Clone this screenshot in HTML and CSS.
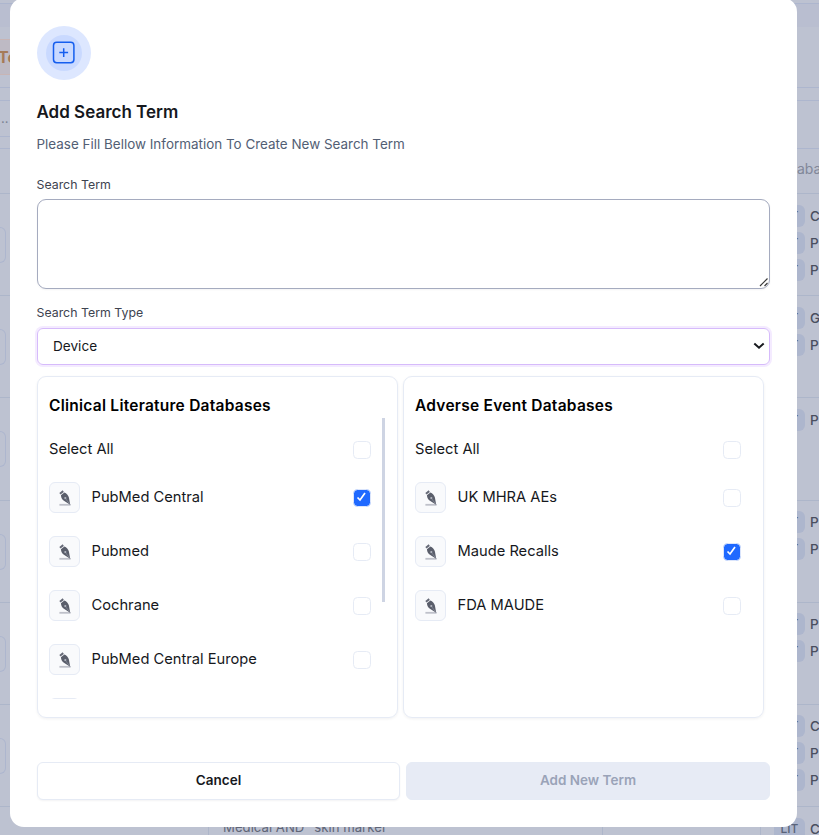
FILE: index.html
```html
<!DOCTYPE html>
<html lang="en">
<head>
<meta charset="utf-8">
<title>Add Search Term</title>
<link rel="stylesheet" href="styles.css">
</head>
<body>
<svg class="defs" aria-hidden="true">
  <symbol id="pen" viewBox="0 0 14 18">
    <path d="M1.4 15.8h11.2" stroke="#bfc1ca" stroke-width="1.8"/>
    <path d="M1.3 4.1 4.7 1.3 5.9 2.9 2.5 5.6Z" fill="#666a77"/>
    <path d="M2.9 6.2 6.4 3.4C8.5 4.4 10.4 6 10.9 8.6L12.2 15.8 6.3 12C4.2 10.800 3.200 9 2.900 6.200Z" fill="#5a5e6b"/>
    <path d="M7.7 9.800 11.900 15.300" stroke="#8d919d" stroke-width=".7"/>
    <circle cx="7.300" cy="9" r="1.100" fill="#b4b7c1"/>
  </symbol>
</svg>
<div class="page">
  <div class="strip top"></div>
  <div class="strip tabs"><span class="tab">Te</span></div>
  <div class="strip gap"></div>
  <div class="strip filter">..</div>
  <div class="strip gap2"></div>
  <div class="row head"><span>aba</span></div>
  <div class="row"><i class="pill"></i><div class="tags"><p><b>LIT</b>C</p><p><b>LIT</b>P</p><p><b>LIT</b>P</p></div></div>
  <div class="row"><i class="pill"></i><div class="tags"><p><b>LIT</b>G</p><p><b>LIT</b>P</p></div></div>
  <div class="row"><i class="pill"></i><div class="tags"><p><b>LIT</b>P</p></div></div>
  <div class="row"><i class="pill"></i><div class="tags"><p><b>LIT</b>P</p><p><b>LIT</b>P</p></div></div>
  <div class="row"><i class="pill"></i><div class="tags"><p><b>LIT</b>P</p><p><b>LIT</b>P</p></div></div>
  <div class="row"><i class="pill"></i><div class="tags"><p><b>LIT</b>C</p><p><b>LIT</b>P</p><p><b>LIT</b>P</p></div></div>
  <div class="row last"><div class="term">Medical AND "skin marker</div><div class="cell"></div><div class="tags"><p><b>LIT</b>C</p></div></div>
</div>

<main class="modal">
  <div class="badge"><div class="badge-in">
    <svg width="24" height="24" viewBox="0 0 24 24" fill="none" stroke="#155eef" stroke-width="1.5"><rect x="1.500" y="1.300" width="20.400" height="20.400" rx="3.200"/><path d="M11.700 7.200v8.800M7.300 11.600h8.800"/></svg>
  </div></div>
  <h1>Add Search Term</h1>
  <p class="sub">Please Fill Bellow Information To Create New Search Term</p>
  <label for="term">Search Term</label>
  <div class="field"><textarea id="term"></textarea><svg class="grip" width="10" height="10" viewBox="0 0 10 10" stroke="#3a3a3a" stroke-width="1.200"><path d="M1 9 8.500 1.500M5.500 9 8.500 6"/></svg></div>
  <label>Search Term Type</label>
  <div class="select"><span>Device</span><svg width="12" height="8" viewBox="0 0 12 8" fill="none" stroke="#16181d" stroke-width="2"><path d="M1.300 1.500 6 5.700l4.700-4.200"/></svg></div>
  <div class="panels">
    <section class="panel">
      <h2>Clinical Literature Databases</h2>
      <div class="list scroll">
        <div class="all"><span>Select All</span><i class="box"></i></div>
        <div class="item"><span class="ico"><svg><use href="#pen"/></svg></span><span class="name">PubMed Central</span><i class="box on"><svg viewBox="0 0 16 16"><path d="M3.500 7.500 6 10 11 3"/></svg></i></div>
        <div class="item"><span class="ico"><svg><use href="#pen"/></svg></span><span class="name">Pubmed</span><i class="box"></i></div>
        <div class="item"><span class="ico"><svg><use href="#pen"/></svg></span><span class="name">Cochrane</span><i class="box"></i></div>
        <div class="item"><span class="ico"><svg><use href="#pen"/></svg></span><span class="name">PubMed Central Europe</span><i class="box"></i></div>
        <div class="item"><span class="ico"></span></div>
      </div>
      <i class="thumb"></i>
    </section>
    <section class="panel">
      <h2>Adverse Event Databases</h2>
      <div class="list">
        <div class="all"><span>Select All</span><i class="box"></i></div>
        <div class="item"><span class="ico"><svg><use href="#pen"/></svg></span><span class="name">UK MHRA AEs</span><i class="box"></i></div>
        <div class="item"><span class="ico"><svg><use href="#pen"/></svg></span><span class="name">Maude Recalls</span><i class="box on"><svg viewBox="0 0 16 16"><path d="M3.500 7.500 6 10 11 3"/></svg></i></div>
        <div class="item"><span class="ico"><svg><use href="#pen"/></svg></span><span class="name">FDA MAUDE</span><i class="box"></i></div>
      </div>
    </section>
  </div>
  <div class="actions">
    <button class="cancel">Cancel</button>
    <button class="add">Add New Term</button>
  </div>
</main>
</body>
</html>
```
FILE: styles.css
```css
* { box-sizing: border-box; }
body { margin: 0; height: 835px; overflow: hidden; position: relative; background: #bdc2d1; font-family: Inter, sans-serif; color: #16181d; }
p, h1, h2 { margin: 0; }
.defs { position: absolute; width: 0; height: 0; }

.page { height: 835px; overflow: hidden; color: #4a4f5f; }
.strip { border-bottom: 1px solid #adb6ce; overflow: hidden; }
.top { height: 4px; }
.tabs { height: 84px; padding-top: 35px; background: linear-gradient(#b9bed0 0 23px, transparent 23px); }
.tab { display: block; width: 30px; height: 36px; border: 1px solid #c8b5b5; border-width: 1px 0; background: #bebac4; color: #a57a58; font-size: 16px; font-weight: 700; line-height: 34px; text-indent: -2px; }
.gap { height: 13px; }
.filter { height: 36px; width: 10px; padding-left: 1px; font-size: 13px; line-height: 35px; color: #7c8294; }
.gap2 { height: 12px; }
.row { display: flex; justify-content: space-between; height: 102.2px; border-bottom: 1px solid #adb6ca; }
.head { height: 45px; align-items: center; justify-content: flex-end; font-size: 14px; color: #818799; }
.head span { width: 22px; overflow: hidden; white-space: nowrap; line-height: 20px; margin-top: -4px; }
.pill { width: 6px; height: 36px; margin-top: 33px; border: 1px solid #adb6ce; border-left: 0; border-radius: 0 8px 8px 0; }
.tags { width: 45px; padding-top: 10.500px; display: flex; flex-direction: column; gap: 5px; }
.tags p { display: flex; align-items: center; gap: 5px; height: 22px; font-size: 13.500px; font-weight: 500; line-height: 20px; white-space: nowrap; }
.tags b { flex: none; width: 31px; height: 22px; border-radius: 6px; background: #adb6cd; font-size: 12px; line-height: 22px; text-align: center; font-weight: 500; color: #5a6379; }
.last { border: 0; }
.last .term { width: 395px; margin-left: 208px; padding: 12px 0 0 14px; border: 1px solid #adb6ca; border-width: 0 1px; font-size: 13.200px; line-height: 17px; color: #606577; }
.last .cell { flex: 1; margin-right: 13px; border-right: 1px solid #adb6ca; }

.modal { position: absolute; left: 10px; top: -2px; width: 787px; height: 829px; padding: 28px 27px 0; background: #fff; border-radius: 14px; }
.badge { display: grid; place-items: center; width: 54px; height: 54px; border-radius: 50%; background: #dde7ff; }
.badge-in { display: grid; place-items: center; width: 36px; height: 36px; border-radius: 50%; background: #c9d9ff; }
h1 { margin: 20px 0 0 -.5px; font-size: 17px; line-height: 24px; font-weight: 600; }
.sub { margin: 10px 0 21px -.5px; font-size: 13.450px; line-height: 20px; color: #525e74; }
label { display: block; margin-left: -.5px; font-size: 12.350px; line-height: 20px; color: #3e4350; }
.field { position: relative; width: 733px; margin: 4px 0 14px; }
textarea { display: block; width: 733px; height: 90px; border: 1px solid #a5abbf; border-radius: 9px; background: #fff; box-shadow: 0 1px 2px #1018280d; resize: none; }
.grip { position: absolute; right: 1px; bottom: 2px; }
.select { display: flex; justify-content: space-between; align-items: center; width: 733px; height: 37px; margin-top: 5px; padding: 0 4px 1px 15px; border: 1px solid #d6bbfb; border-radius: 6px; box-shadow: 0 0 0 2px #f4ebff; font-size: 13.600px; }
.panels { display: grid; grid-template-columns: 361px 361px; gap: 5px; margin-top: 11px; }
.panel { position: relative; height: 342px; padding: 18px 11px 0; border: 1px solid #e6ebf5; border-radius: 9px; box-shadow: 0 1px 3px #1018280f; }
h2 { font-size: 15.500px; letter-spacing: .25px; line-height: 22px; font-weight: 600; color: #000; white-space: nowrap; }
.list { height: 282px; overflow: hidden; padding-right: 11px; font-size: 14.700px; }
.scroll { padding-right: 15px; }
.all { display: flex; justify-content: space-between; align-items: center; height: 65px; padding-bottom: 2px; }
.all .box { position: relative; top: 1px; }
.item { display: flex; align-items: center; gap: 11px; height: 31px; margin-bottom: 23px; }
.name { padding: 0 0 1px .5px; }
.ico { display: grid; place-items: center; width: 31px; height: 31px; border: 1px solid #e6ebf5; border-radius: 6px; background: #f9fafc; }
.ico svg { width: 14px; height: 18px; }
.box { flex: none; width: 18px; height: 18px; margin-left: auto; border: 1px solid #e6ebf5; border-radius: 4.500px; }
.box.on { background: #1f69ff; border-color: #dbe5fb; }
.box svg { display: block; width: 16px; height: 16px; fill: none; stroke: #fff; stroke-width: 1.700; }
.thumb { position: absolute; right: 12px; top: 41px; width: 3px; height: 184px; background: #ced4e3; }
.actions { display: flex; gap: 6px; margin-top: 44px; }
button { height: 38px; padding: 0 0 2px; border: 1px solid #e6ebf5; border-radius: 6px; font: 600 13.500px Inter, sans-serif; }
.cancel { width: 363px; background: #fff; color: #16181d; box-shadow: 0 1px 2px #1018280d; }
.add { width: 364px; background: #e7ebf5; color: #9aa3b8; }
```
